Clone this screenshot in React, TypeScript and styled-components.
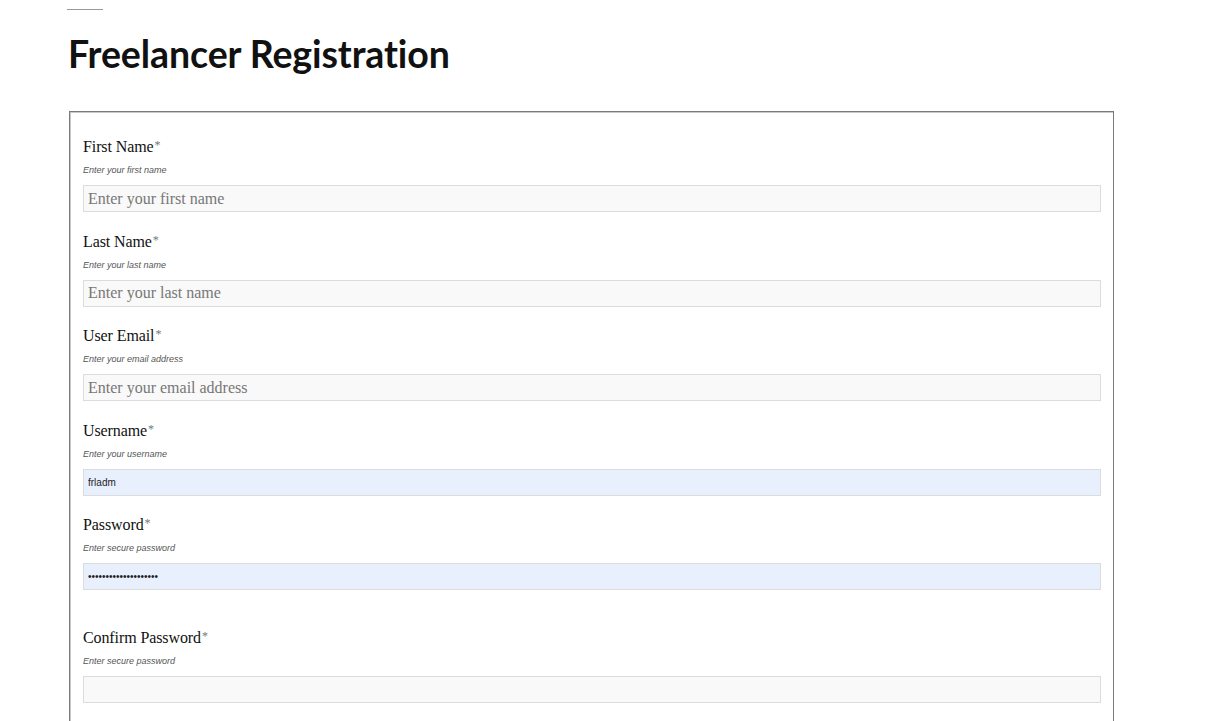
import React from 'react';
import styled, { createGlobalStyle } from 'styled-components';

const GlobalStyle = createGlobalStyle`
  html, body {
    margin: 0;
    padding: 0;
    background: #ffffff;
  }
  body {
    font-family: "Liberation Serif", serif;
    color: #111;
  }
`;

type Field = {
  label: string;
  hint: string;
  placeholder?: string;
  value?: string;
  type?: string;
  filled?: boolean;
  spaced?: boolean;
};

const fields: Field[] = [
  { label: 'First Name', hint: 'Enter your first name', placeholder: 'Enter your first name' },
  { label: 'Last Name', hint: 'Enter your last name', placeholder: 'Enter your last name' },
  { label: 'User Email', hint: 'Enter your email address', placeholder: 'Enter your email address', type: 'email' },
  { label: 'Username', hint: 'Enter your username', value: 'frladm', filled: true },
  { label: 'Password', hint: 'Enter secure password', value: 'xxxxxxxxxxxxxxxxxxxx', type: 'password', filled: true },
  { label: 'Confirm Password', hint: 'Enter secure password', type: 'password', spaced: true },
];

const App: React.FC = () => {
  return (
    <>
      <GlobalStyle />
      <Page>
        <TopRule />
        <Title>Freelancer Registration</Title>
        <FormBox>
          {fields.map((f) => (
            <FieldRow key={f.label} $spaced={f.spaced}>
              <Label>
                {f.label}
                <Required>*</Required>
              </Label>
              <Hint>{f.hint}</Hint>
              <Input
                type={f.type || 'text'}
                placeholder={f.placeholder}
                defaultValue={f.value}
                $filled={f.filled}
                readOnly
              />
            </FieldRow>
          ))}
        </FormBox>
      </Page>
    </>
  );
};

export default App;

const Page = styled.div`
  padding: 9px 96px 0 68px;
  display: flex;
  flex-direction: column;
  align-items: flex-start;
`;

const TopRule = styled.div`
  width: 36px;
  height: 1px;
  margin-left: -1px;
  background: #9a9a9a;
`;

const Title = styled.h1`
  margin: 21px 0 0;
  font-family: Lato, "Open Sans", sans-serif;
  font-weight: 700;
  font-size: 37.5px;
  line-height: 45px;
  letter-spacing: -0.1px;
  color: #111;
`;

const FormBox = styled.div`
  box-sizing: border-box;
  margin-top: 35px;
  margin-left: 1px;
  width: 1045px;
  border: 1px solid #7a7a7a;
  box-shadow: inset 1px 1px 0 #c8c8c8;
  padding: 25px 12px 40px 13px;
  display: flex;
  flex-direction: column;
`;

const FieldRow = styled.div<{ $spaced?: boolean }>`
  display: flex;
  flex-direction: column;
  margin-top: ${(p) => (p.$spaced ? '18px' : '0')};
  margin-bottom: 19.5px;
`;

const Label = styled.label`
  font-family: "Liberation Serif", serif;
  font-size: 16px;
  line-height: 20px;
  height: 20px;
  color: #111;
  letter-spacing: -0.1px;
`;

const Required = styled.span`
  color: #6b7b7b;
  font-size: 12px;
  line-height: 0;
  position: relative;
  top: -3px;
  margin-left: 1px;
`;

const Hint = styled.span`
  margin-top: 7px;
  font-family: "Liberation Sans", Arial, sans-serif;
  font-style: italic;
  font-size: 9px;
  line-height: 12px;
  height: 12px;
  color: #555;
`;

const Input = styled.input<{ $filled?: boolean }>`
  box-sizing: border-box;
  margin-top: 9px;
  width: 100%;
  height: 27px;
  padding: 0 4px;
  border: 1px solid #dcdcdc;
  background: ${(p) => (p.$filled ? '#e8f0fe' : '#f9f9f9')};
  font-family: ${(p) => (p.$filled ? '"Liberation Sans", Arial, sans-serif' : '"Liberation Serif", serif')};
  font-size: ${(p) => (p.$filled ? '10px' : '16px')};
  color: #222;
  outline: none;
  &::placeholder {
    color: #777;
  }
`;
